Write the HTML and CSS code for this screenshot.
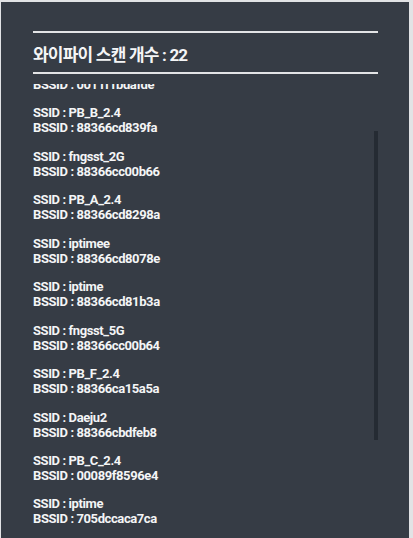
FILE: index.html
```html
<!DOCTYPE html>
<html lang="ko">
<head>
<meta charset="utf-8">
<title>와이파이 스캔</title>
<link rel="stylesheet" href="styles.css">
</head>
<body>
<div class="panel">
  <div class="rule"></div>
  <div class="title">와이파이 스캔 개수 : 22</div>
  <div class="rule"></div>
  <div class="list">
    <div class="list-inner">
      <div class="item"><div>SSID : PB_D_2.4</div><div>BSSID : 0011f1bdafde</div></div>
      <div class="item"><div>SSID : PB_B_2.4</div><div>BSSID : 88366cd839fa</div></div>
      <div class="item"><div>SSID : fngsst_2G</div><div>BSSID : 88366cc00b66</div></div>
      <div class="item"><div>SSID : PB_A_2.4</div><div>BSSID : 88366cd8298a</div></div>
      <div class="item"><div>SSID : iptimee</div><div>BSSID : 88366cd8078e</div></div>
      <div class="item"><div>SSID : iptime</div><div>BSSID : 88366cd81b3a</div></div>
      <div class="item"><div>SSID : fngsst_5G</div><div>BSSID : 88366cc00b64</div></div>
      <div class="item"><div>SSID : PB_F_2.4</div><div>BSSID : 88366ca15a5a</div></div>
      <div class="item"><div>SSID : Daeju2</div><div>BSSID : 88366cbdfeb8</div></div>
      <div class="item"><div>SSID : PB_C_2.4</div><div>BSSID : 00089f8596e4</div></div>
      <div class="item"><div>SSID : iptime</div><div>BSSID : 705dccaca7ca</div></div>
      <div class="item"><div>SSID : PB_E_2.4</div><div>BSSID : 88366cd8123a</div></div>
    </div>
  </div>
  <div class="scrollbar"></div>
</div>
</body>
</html>
```
FILE: styles.css
```css
html, body {
  margin: 0;
  padding: 0;
}
body {
  background: #e2e3e5;
  height: 538px;
  overflow: hidden;
  font-family: Roboto, "Noto Sans CJK KR", sans-serif;
}
.panel {
  position: relative;
  margin: 2px 4px 0 1px;
  height: 536px;
  background: #363c45;
  padding: 29px 31px 0 32px;
  box-sizing: border-box;
  overflow: hidden;
  color: #f4f5f6;
  display: flex;
  flex-direction: column;
}
.rule {
  height: 2px;
  flex: none;
  background: #e3e4e6;
}
.title {
  height: 39px;
  flex: none;
  display: flex;
  align-items: center;
  font-size: 17px;
  letter-spacing: -0.8px;
  font-weight: 700;
  padding-top: 1px;
  box-sizing: border-box;
}
.list {
  flex: 1;
  margin-top: 10px;
  overflow: hidden;
}
.list-inner {
  margin-top: -22px;
  display: flex;
  flex-direction: column;
}
.item {
  font-size: 13px;
  letter-spacing: -0.4px;
  font-weight: 700;
  line-height: 15px;
  padding-bottom: 13.44px;
}
.scrollbar {
  position: absolute;
  left: 373px;
  top: 129px;
  width: 4px;
  height: 309px;
  background: #252b33;
}
```
